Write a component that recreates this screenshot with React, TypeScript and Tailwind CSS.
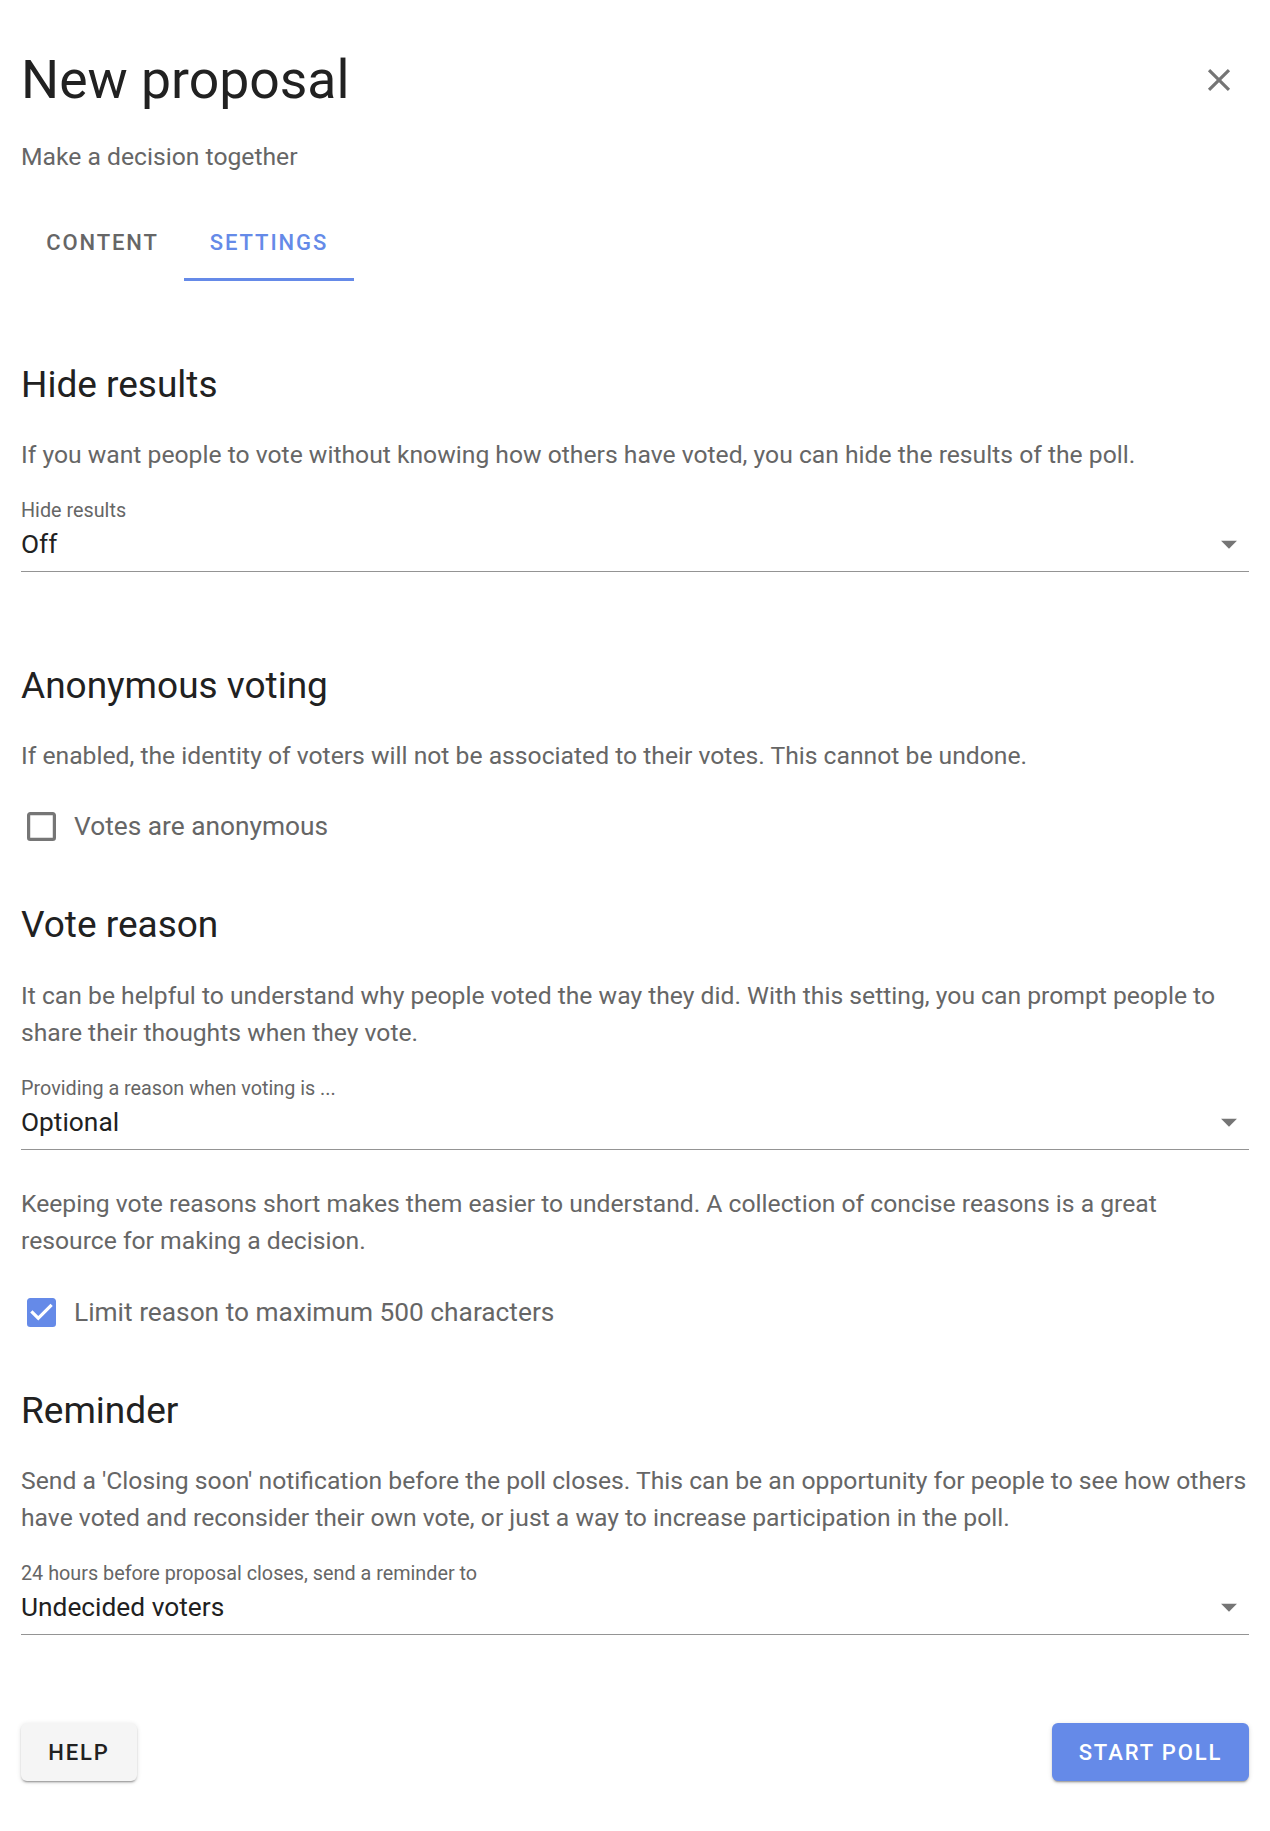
import React from 'react';

const BLUE = '#658ae8';

function CloseIcon() {
  return (
    <svg viewBox="0 0 24 24" className="h-[38px] w-[38px]" fill="#757575">
      <path d="M19,6.41L17.59,5L12,10.59L6.41,5L5,6.41L10.59,12L5,17.59L6.41,19L12,13.41L17.59,19L19,17.59L13.41,12L19,6.41Z" />
    </svg>
  );
}

function MenuDown() {
  return (
    <svg viewBox="0 0 24 24" className="h-[38px] w-[38px]" fill="#757575">
      <path d="M7,10L12,15L17,10H7Z" />
    </svg>
  );
}

function Checkbox({ checked, label }: { checked: boolean; label: string }) {
  return (
    <div className="flex h-[40px] items-center pl-[6px]">
      <svg viewBox="3 3 18 18" className="h-[29px] w-[29px]">
        {checked ? (
          <path
            fill={BLUE}
            d="M10,17L5,12L6.41,10.58L10,14.17L17.59,6.58L19,8M19,3H5C3.89,3 3,3.89 3,5V19A2,2 0 0,0 5,21H19A2,2 0 0,0 21,19V5C21,3.89 20.1,3 19,3Z"
          />
        ) : (
          <path
            fill="#767676"
            d="M19,3H5C3.89,3 3,3.89 3,5V19A2,2 0 0,0 5,21H19A2,2 0 0,0 21,19V5C21,3.89 20.1,3 19,3M19,5V19H5V5H19Z"
          />
        )}
      </svg>
      <span className="ml-[18px] text-[26.3px] leading-[40px] text-[#666666]">{label}</span>
    </div>
  );
}

function SelectField({ label, value }: { label: string; value: string }) {
  return (
    <div className="border-b border-[#949494] pb-[10px]">
      <div className="text-[19.8px] leading-[24px] text-[#666666]">{label}</div>
      <div className="mt-[4px] flex h-[34px] items-center justify-between">
        <span className="text-[26.3px] leading-[34px] text-[#212121]">{value}</span>
        <span className="mr-[1px] flex items-center">
          <MenuDown />
        </span>
      </div>
    </div>
  );
}

function Heading({ children }: { children: React.ReactNode }) {
  return <h2 className="text-[37px] leading-[44px] font-normal text-[#212121]">{children}</h2>;
}

function Para({ children }: { children: React.ReactNode }) {
  return <p className="text-[24.7px] leading-[37px] text-[#666666]">{children}</p>;
}

export default function App() {
  return (
    <div className="min-h-screen bg-white px-[21px] pb-[50px] font-['Roboto',sans-serif]">
      {/* header */}
      <div className="flex items-center justify-between pt-[48px]">
        <h1 className="text-[53.5px] leading-[64px] font-normal text-[#212121]">New proposal</h1>
        <button className="mr-[11px] flex items-center">
          <CloseIcon />
        </button>
      </div>
      <div className="mt-[27px] text-[24.7px] leading-[36px] text-[#666666]">Make a decision together</div>

      {/* tabs */}
      <div className="mt-[29px] flex">
        <div className="flex h-[77px] w-[163px] items-center justify-center text-[22px] font-medium uppercase tracking-[1.9px] text-[#666666]">
          Content
        </div>
        <div
          className="flex h-[77px] w-[170px] items-center justify-center border-b-[3px] pt-[3px] text-[22px] font-medium uppercase tracking-[1.9px]"
          style={{ color: BLUE, borderColor: BLUE }}
        >
          Settings
        </div>
      </div>

      {/* hide results */}
      <div className="mt-[82px]">
        <Heading>Hide results</Heading>
        <div className="mt-[29px]">
          <Para>If you want people to vote without knowing how others have voted, you can hide the results of the poll.</Para>
        </div>
        <div className="mt-[26px]">
          <SelectField label="Hide results" value="Off" />
        </div>
      </div>

      {/* anonymous */}
      <div className="mt-[92px]">
        <Heading>Anonymous voting</Heading>
        <div className="mt-[29px]">
          <Para>If enabled, the identity of voters will not be associated to their votes. This cannot be undone.</Para>
        </div>
        <div className="mt-[32px]">
          <Checkbox checked={false} label="Votes are anonymous" />
        </div>
      </div>

      {/* vote reason */}
      <div className="mt-[57px]">
        <Heading>Vote reason</Heading>
        <div className="mt-[30px]">
          <Para>
            It can be helpful to understand why people voted the way they did. With this setting, you can prompt people to
            share their thoughts when they vote.
          </Para>
        </div>
        <div className="mt-[26px]">
          <SelectField label="Providing a reason when voting is ..." value="Optional" />
        </div>
        <div className="mt-[35px]">
          <Para>
            Keeping vote reasons short makes them easier to understand. A collection of concise reasons is a great
            resource for making a decision.
          </Para>
        </div>
        <div className="mt-[33px]">
          <Checkbox checked={true} label="Limit reason to maximum 500 characters" />
        </div>
      </div>

      {/* reminder */}
      <div className="mt-[57px]">
        <Heading>Reminder</Heading>
        <div className="mt-[29px]">
          <Para>
            Send a 'Closing soon' notification before the poll closes. This can be an opportunity for people to see how
            others have voted and reconsider their own vote, or just a way to increase participation in the poll.
          </Para>
        </div>
        <div className="mt-[26px]">
          <SelectField label="24 hours before proposal closes, send a reminder to" value="Undecided voters" />
        </div>
      </div>

      {/* actions */}
      <div className="mt-[88px] flex items-center justify-between">
        <button className="flex h-[58px] w-[116px] items-center justify-center rounded-[6px] bg-[#f5f5f5] text-[22px] font-medium uppercase tracking-[1.9px] text-[#212121] shadow-[0_3px_1px_-2px_rgba(0,0,0,0.2),0_2px_2px_0_rgba(0,0,0,0.14),0_1px_5px_0_rgba(0,0,0,0.12)]">
          Help
        </button>
        <button
          className="flex h-[58px] w-[197px] items-center justify-center rounded-[6px] text-[22px] font-medium uppercase tracking-[1.9px] text-white shadow-[0_3px_1px_-2px_rgba(0,0,0,0.2),0_2px_2px_0_rgba(0,0,0,0.14),0_1px_5px_0_rgba(0,0,0,0.12)]"
          style={{ backgroundColor: BLUE }}
        >
          Start poll
        </button>
      </div>
    </div>
  );
}
